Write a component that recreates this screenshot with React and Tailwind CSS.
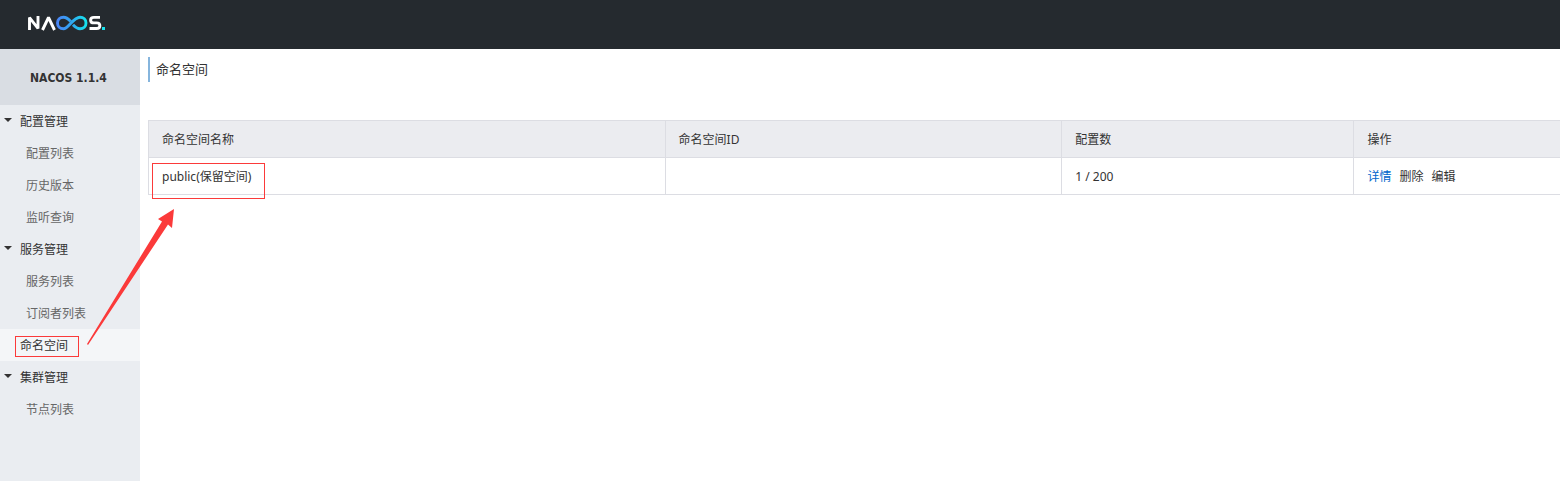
const groups = [
  { title: '配置管理', items: ['配置列表', '历史版本', '监听查询'] },
  { title: '服务管理', items: ['服务列表', '订阅者列表'] },
  { title: '命名空间', active: true },
  { title: '集群管理', items: ['节点列表'] },
];

const columns = ['命名空间名称', '命名空间ID', '配置数', '操作'];

function Logo() {
  return (
    <svg width="80" height="20" viewBox="0 0 80 20" role="img" aria-label="NACOS">
      <defs>
        <linearGradient id="loop" x1="0" x2="1" y1="0" y2="0">
          <stop offset="0" stopColor="#4a86f7" />
          <stop offset="0.5" stopColor="#2fa8f0" />
          <stop offset="1" stopColor="#17e2ee" />
        </linearGradient>
      </defs>
      <g fill="none" strokeWidth="2.9">
        <path d="M2.500 17V4.600L11 15.400V3" stroke="#fff" strokeLinejoin="bevel" />
        <path d="M15.500 17L21.500 4.500L27.500 17" stroke="#fff" strokeLinejoin="bevel" />
        <path
          d="M43.500 8.200C41 5.500 39 4.200 36.500 4.200C33 4.200 30.500 6.700 30.500 10S33 15.800 36.500 15.800C41.500 15.800 46 4.200 53 4.200C56.500 4.200 59 6.700 59 10S56.500 15.800 53 15.800C50.500 15.800 48.500 14.500 46 11.800"
          stroke="url(#loop)"
        />
        <path d="M73 4.400H67C62.500 4.400 62.500 9.900 67 9.900H69.500C74 9.900 74 15.500 69.500 15.500H62.500" stroke="#fff" />
      </g>
      <rect x="75" y="14" width="3" height="3" fill="#17e2ee" />
    </svg>
  );
}

function Caret() {
  return (
    <svg className="mb-1 ml-1 shrink-0" width="8" height="4" viewBox="0 0 8 4" aria-hidden="true">
      <path d="M0 0H8L4 4Z" fill="#333" />
    </svg>
  );
}

function Sidebar() {
  return (
    <nav className="w-[140px] shrink-0 bg-[#eaedf1]">
      <h1 className="flex h-14 items-center bg-[#d9dde3] pl-[30px] pt-0.5 font-['DejaVu_Sans_Condensed',sans-serif] text-xs font-bold">NACOS 1.1.4</h1>
      <ul>
        {groups.map((group) => (
          <li key={group.title}>
            {group.active ? (
              <a href="#namespace" aria-current="page" className="flex h-8 items-center bg-[#f4f6f8] pl-5 pt-0.5">
                <span className="relative">
                  {group.title}
                  <span className="pointer-events-none absolute -left-[5px] -top-0.5 h-[21px] w-16 border border-[#fb3a3a]" />
                </span>
              </a>
            ) : (
              <button type="button" aria-expanded="true" className="flex h-8 w-full items-center gap-2 pt-0.5 text-left">
                <Caret />
                {group.title}
              </button>
            )}
            {group.items && (
              <ul className="text-[#666]">
                {group.items.map((item) => (
                  <li key={item}>
                    <a href="#item" className="flex h-8 items-center pl-[26px] pt-0.5">{item}</a>
                  </li>
                ))}
              </ul>
            )}
          </li>
        ))}
      </ul>
    </nav>
  );
}

function NamespaceTable() {
  return (
    <table className="w-full table-fixed border-collapse text-left">
      <colgroup>
        <col className="w-[36.6%]" />
        <col className="w-[28.1%]" />
        <col className="w-[20.7%]" />
        <col />
      </colgroup>
      <thead>
        <tr className="h-[37px] border-y border-[#dcdde3] bg-[#ebecf0]">
          {columns.map((name) => (
            <th key={name} scope="col" className="border-l border-[#dcdde3] px-[13px] pt-0.5 font-normal">{name}</th>
          ))}
        </tr>
      </thead>
      <tbody>
        <tr className="h-[37px] border-b border-[#dcdde3]">
          <td className="relative border-l border-[#dcdde3] px-[13px] pt-0.5">
            public(保留空间)
            <span className="pointer-events-none absolute left-[3px] top-[5px] h-9 w-[113px] border border-[#fb3a3a]" />
          </td>
          <td className="border-l border-[#dcdde3] px-[13px] pt-0.5" />
          <td className="border-l border-[#dcdde3] px-[13px] pt-0.5">1 / 200</td>
          <td className="border-l border-[#dcdde3] px-[13px] pt-0.5">
            <div className="flex gap-2">
              <a href="#detail" className="text-[#0066cc]">详情</a>
              <button type="button">删除</button>
              <button type="button">编辑</button>
            </div>
          </td>
        </tr>
      </tbody>
    </table>
  );
}

export default function App() {
  return (
    <div className="relative flex min-h-screen flex-col bg-white font-['Noto_Sans','Noto_Sans_CJK_SC',sans-serif] text-xs text-[#333]">
      <header className="flex h-[49px] items-center bg-[#252a2f] pb-1 pl-[27px]">
        <Logo />
      </header>
      <div className="flex grow">
        <Sidebar />
        <main className="min-w-0 grow pl-2 pt-2">
          <h2 className="mb-[38px] flex h-[25px] items-center border-l-2 border-[#86b5dd] pl-1.5 text-[13px]">命名空间</h2>
          <NamespaceTable />
        </main>
      </div>
      <svg className="pointer-events-none absolute left-[87px] top-[209px]" width="88" height="137" viewBox="0 0 88 137" aria-hidden="true">
        <path d="M87 0L71 10L75 12.500L0 135L1 136L81 15.500L85 19Z" fill="#fb3a3a" />
      </svg>
    </div>
  );
}
